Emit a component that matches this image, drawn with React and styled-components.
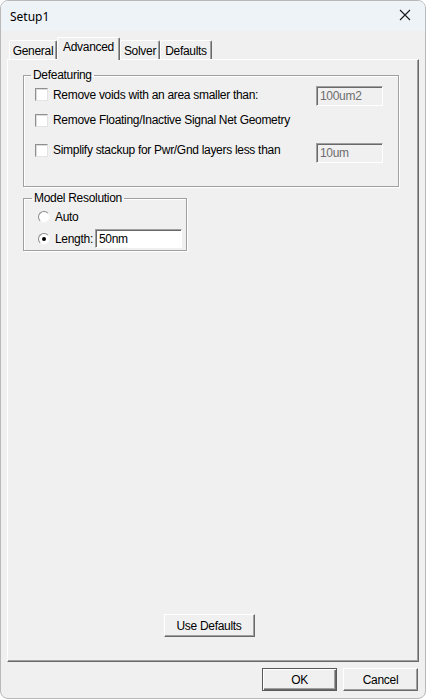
import React from 'react';
import styled, { createGlobalStyle, css } from 'styled-components';

const GlobalStyle = createGlobalStyle`
  html, body {
    margin: 0;
    padding: 0;
    background: #ffffff;
  }
  * {
    box-sizing: border-box;
  }
`;

const raised = css`
  border-top: 1px solid #ffffff;
  border-left: 1px solid #ffffff;
  border-right: 1px solid #696969;
  border-bottom: 1px solid #696969;
  box-shadow: inset -1px -1px 0 #a0a0a0;
`;

const sunken = css`
  border-top: 1px solid #a0a0a0;
  border-left: 1px solid #a0a0a0;
  border-right: 1px solid #ffffff;
  border-bottom: 1px solid #ffffff;
  box-shadow: inset 1px 1px 0 #696969;
`;

const Window = styled.div`
  width: 426px;
  height: 699px;
  border: 1px solid #b9b9b9;
  border-radius: 8px;
  overflow: hidden;
  display: flex;
  flex-direction: column;
  background: #f0f0f0;
  font-family: "Liberation Sans", Arial, sans-serif;
  font-size: 12px;
  letter-spacing: -0.3px;
  color: #000;
`;

const TitleBar = styled.div`
  height: 30px;
  flex: none;
  display: flex;
  align-items: center;
  justify-content: space-between;
  padding: 0 8px 0 9px;
  background: #eef3f8;
  font-family: "Noto Sans", "Open Sans", sans-serif;
  font-size: 12px;
  letter-spacing: 0;
`;

const CloseButton = styled.button`
  width: 24px;
  height: 24px;
  border: none;
  background: transparent;
  display: flex;
  align-items: center;
  justify-content: center;
  padding: 0;
  margin-top: -3px;
`;

const Body = styled.div`
  flex: 1;
  display: flex;
  flex-direction: column;
  padding: 6px 6px 8px 6px;
`;

const TabStrip = styled.div`
  display: flex;
  align-items: flex-end;
  height: 22px;
  padding-left: 2px;
`;

const Tab = styled.div`
  ${raised};
  border-bottom: none;
  box-shadow: inset -1px 0 0 #a0a0a0;
  width: ${p => p.$w}px;
  height: ${p => (p.$active ? 23 : 19)}px;
  padding-top: ${p => (p.$active ? 2 : 3)}px;
  text-align: center;
  background: #f0f0f0;
  border-radius: 2px 2px 0 0;
  position: relative;
  z-index: ${p => (p.$active ? 2 : 1)};
  margin-bottom: ${p => (p.$active ? -1 : 0)}px;
  white-space: nowrap;
`;

const Panel = styled.div`
  ${raised};
  height: 603px;
  display: flex;
  flex-direction: column;
  padding: 8px 0 0 15px;
`;

const Group = styled.fieldset`
  margin: ${p => p.$mt}px 0 0 0;
  width: ${p => p.$w}px;
  border: 1px solid #a0a0a0;
  box-shadow: 1px 1px 0 #ffffff, inset 1px 1px 0 #ffffff;
  padding: 0 ${p => p.$pr}px ${p => p.$pb}px ${p => p.$pl}px;
  min-width: 0;
`;

const Legend = styled.legend`
  padding: 0 2px;
  margin-left: ${p => p.$x}px;
  line-height: 14px;
`;

const Row = styled.div`
  display: flex;
  align-items: center;
  justify-content: space-between;
  height: ${p => p.$h || 20}px;
  margin-top: ${p => p.$mt}px;
`;

const CheckLabel = styled.label`
  display: flex;
  align-items: center;
  gap: 5px;
  margin-bottom: ${p => p.$lift || 0}px;
  white-space: nowrap;
`;

const CheckBox = styled.span`
  width: 13px;
  height: 13px;
  flex: none;
  background: #ffffff;
  border: 1px solid #8f8f8f;
  border-right-color: #e3e3e3;
  border-bottom-color: #e3e3e3;
  box-shadow: inset 1px 1px 0 #dcdcdc;
`;

const RadioLabel = styled.label`
  display: flex;
  align-items: center;
  gap: 5px;
  white-space: nowrap;
`;

const Radio = styled.span`
  width: 12px;
  height: 12px;
  flex: none;
  border-radius: 50%;
  background: #ffffff;
  border: 1px solid;
  border-color: #8a8a8a #f4f4f4 #f4f4f4 #8a8a8a;
  display: flex;
  align-items: center;
  justify-content: center;
  &::after {
    content: '';
    width: 4px;
    height: 4px;
    border-radius: 50%;
    background: ${p => (p.$checked ? '#000' : 'transparent')};
  }
`;

const Field = styled.div`
  ${sunken};
  width: ${p => p.$w}px;
  height: ${p => p.$h}px;
  background: ${p => (p.$disabled ? '#f0f0f0' : '#ffffff')};
  color: ${p => (p.$disabled ? '#6d6d6d' : '#000')};
  padding: 2px 0 0 3px;
  line-height: 14px;
`;

const Spacer = styled.div`
  flex: 1;
`;

const Button = styled.button`
  ${raised};
  width: ${p => p.$w}px;
  height: 23px;
  background: #f0f0f0;
  font-family: "Liberation Sans", Arial, sans-serif;
  font-size: 12px;
  letter-spacing: -0.3px;
  color: #000;
  padding: 0;
  ${p =>
    p.$default &&
    css`
      border: 1px solid #5a5a5a;
      box-shadow: inset 1px 1px 0 #ffffff, inset -1px -1px 0 #696969, inset -2px -2px 0 #a0a0a0;
    `}
`;

const DefaultsButton = styled(Button)`
  align-self: center;
  margin: 0 23px 24px 0;
`;

const Footer = styled.div`
  display: flex;
  justify-content: flex-end;
  gap: 6px;
  padding-top: 6px;
  padding-right: 1px;
`;

const tabs = [
  { label: 'General', w: 48 },
  { label: 'Advanced', w: 63, active: true },
  { label: 'Solver', w: 40 },
  { label: 'Defaults', w: 52 },
];

export default function App() {
  return (
    <>
      <GlobalStyle />
      <Window>
        <TitleBar>
          <span>Setup1</span>
          <CloseButton aria-label="Close">
            <svg width="12" height="12" viewBox="0 0 12 12">
              <path d="M1 1 L11 11 M11 1 L1 11" stroke="#1a1a1a" strokeWidth="1.1" fill="none" />
            </svg>
          </CloseButton>
        </TitleBar>
        <Body>
          <TabStrip>
            {tabs.map(t => (
              <Tab key={t.label} $w={t.w} $active={t.active}>{t.label}</Tab>
            ))}
          </TabStrip>
          <Panel>
            <Group $w={376} $mt={0} $pl={11} $pr={15} $pb={23}>
              <Legend $x={-4}>Defeaturing</Legend>
              <Row $mt={4}>
                <CheckLabel $lift={3}><CheckBox />Remove voids with an area smaller than:</CheckLabel>
                <Field $w={67} $h={20} $disabled>100um2</Field>
              </Row>
              <Row $mt={4}>
                <CheckLabel><CheckBox />Remove Floating/Inactive Signal Net Geometry</CheckLabel>
              </Row>
              <Row $mt={13}>
                <CheckLabel $lift={6}><CheckBox />Simplify stackup for Pwr/Gnd layers less than</CheckLabel>
                <Field $w={67} $h={20} $disabled>10um</Field>
              </Row>
            </Group>
            <Group $w={164} $mt={4} $pl={14} $pr={4} $pb={2}>
              <Legend $x={-6}>Model Resolution</Legend>
              <Row $mt={5} $h={14}>
                <RadioLabel><Radio />Auto</RadioLabel>
              </Row>
              <Row $mt={5} $h={19}>
                <RadioLabel>
                  <Radio $checked />Length:
                </RadioLabel>
                <Field $w={87} $h={19}>50nm</Field>
              </Row>
            </Group>
            <Spacer />
            <DefaultsButton $w={91}>Use Defaults</DefaultsButton>
          </Panel>
          <Footer>
            <Button $w={75} $default>OK</Button>
            <Button $w={75}>Cancel</Button>
          </Footer>
        </Body>
      </Window>
    </>
  );
}
